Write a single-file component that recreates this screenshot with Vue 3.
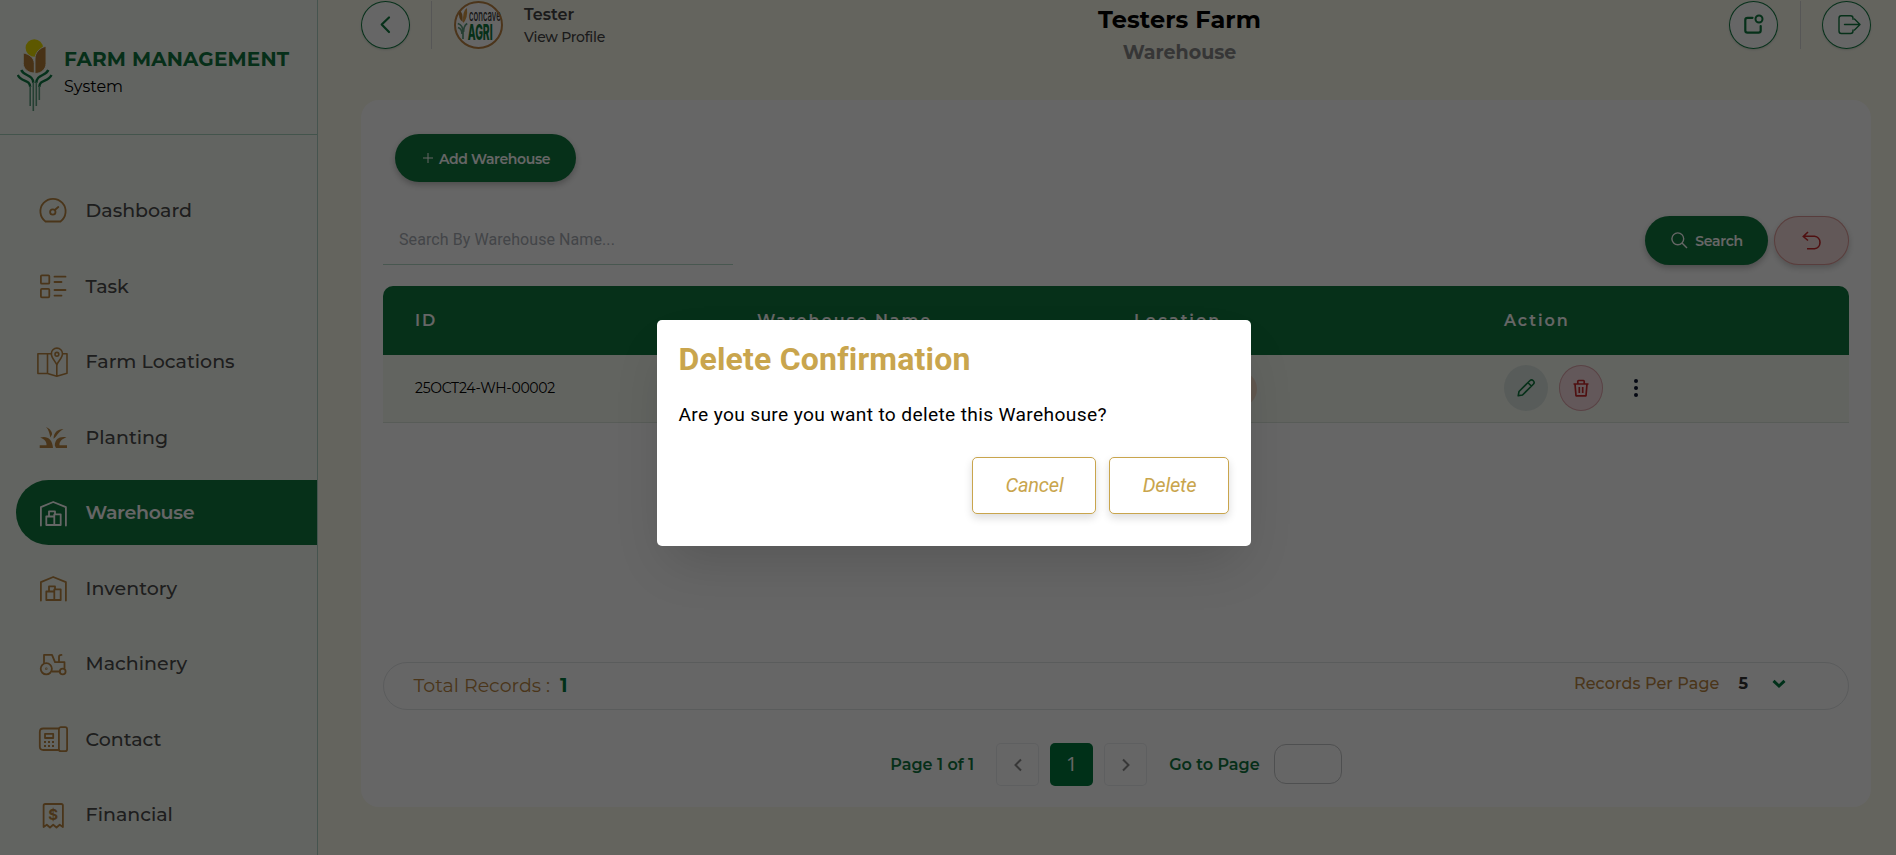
<script setup>
const nav = [
  { label: 'Dashboard', icon: 'dashboard' },
  { label: 'Task', icon: 'task' },
  { label: 'Farm Locations', icon: 'map' },
  { label: 'Planting', icon: 'plant' },
  { label: 'Warehouse', icon: 'store', active: true },
  { label: 'Inventory', icon: 'store' },
  { label: 'Machinery', icon: 'tractor' },
  { label: 'Contact', icon: 'phone' },
  { label: 'Financial', icon: 'receipt' },
]
</script>

<template>
  <div class="page">
    <aside class="sidebar">
      <div class="brand">
        <svg class="logo" width="36" height="74" viewBox="0 0 36 74">
          <circle cx="17.3" cy="9" r="8.7" fill="#e8dc00" />
          <path d="M6.3 14.5C12 15.5 17 19 17.3 25V34.5C11 34.5 6.3 30 6.3 25Z" transform="translate(0 -.5)" fill="#b37d38" stroke="#f5f9f0" stroke-width=".9" />
          <path d="M29 7.2C22.500 9 18 13.500 18 20V34.500C24.500 34.500 29 30 29 24.500Z" fill="#b37d38" stroke="#f5f9f0" stroke-width=".9" />
          <g fill="none" stroke="#107a45">
            <path d="M4.300 31C6.500 37 16.300 35.500 16.300 44" stroke-width="2.400" />
            <path d="M.8 36C4 43.500 13 40 13.200 48" stroke-width="2.400" />
            <path d="M31.300 31C29 37 19.300 35.500 19.300 44" stroke-width="2.400" />
            <path d="M34.500 36C31 43.500 22.500 40 22.300 48" stroke-width="2.400" />
          </g>
          <g fill="none" stroke="#5f9f80" stroke-width="1.600">
            <path d="M16.300 43V72M13.200 47V67M19.300 43V67M22.300 47V61" />
          </g>
        </svg>
        <div class="brand-text">
          <strong>FARM MANAGEMENT</strong>
          <span>System</span>
        </div>
      </div>
      <nav class="nav">
        <a v-for="n in nav" :key="n.label" class="nav-item" :class="{ active: n.active }">
          <svg class="nav-icon" viewBox="0 0 32 32" width="32" height="32">
            <g v-if="n.icon === 'dashboard'">
              <path d="M8.500 26.500H23.500A12.600 12.600 0 1 0 8.500 26.500Z" />
              <circle cx="15.800" cy="17" r="2.700" /><path d="M17.800 15l3.500-3" />
            </g>
            <g v-else-if="n.icon === 'task'">
              <rect x="3.900" y="5.300" width="8.400" height="8.400" rx="1" />
              <rect x="3.900" y="18.900" width="8.400" height="8.400" rx="1" />
              <path d="M17.500 6.700h11M17.500 12h7M17.500 20h11M17.500 25.600h7" />
            </g>
            <g v-else-if="n.icon === 'map'" class="thin">
              <path d="M14.500 7.800H.9V27.500H10.500L19.800 30.200L30 27.300V7.800H25.700M10.500 8V27.500M19.800 18.500V30" />
              <path d="M19.800 18.500C17.500 14.500 14.300 11.500 14.300 7.700A5.600 5.600 0 0 1 25.500 7.700C25.500 11.500 22 14.500 19.800 18.500Z" />
              <circle cx="19.900" cy="8.300" r="1.900" />
            </g>
            <g v-else-if="n.icon === 'plant'" class="solid">
              <path d="M9 6C13 7.500 15.500 11 15 13.500L13.300 16.500C12.500 12.500 12 9 9 6Z" />
              <path d="M26.500 8C20.500 8 16.800 11.500 16.500 17.800C19.500 16 21 11 26.500 8Z" />
              <path d="M3.200 16.500C10 14.500 15.500 18 16 27H2.700V24.300H9.500C10 21 7.500 18 3.200 16.500Z" />
              <path d="M29.500 16.300C23 15 18 17.500 17.800 24.500L19 27H30V24.300H22.500C22 21 25 17.800 29.500 16.300Z" />
            </g>
            <g v-else-if="n.icon === 'store'">
              <path d="M3.900 28.500V10.200L16.200 5L28.900 10.200V28.500" />
              <path d="M9.300 19.500H17.300V28H9.300ZM12 19.500V14.400H18V17.300M17.300 17.300H23.700V28H17.300Z" />
            </g>
            <g v-else-if="n.icon === 'tractor'">
              <circle cx="9.300" cy="20.800" r="5.600" /><circle cx="25.700" cy="23.500" r="2.900" />
              <circle cx="9.300" cy="20.800" r=".3" />
              <path d="M7 14.500V6.900H15L18 14.200H27.500V20M22 14V8.700Q22 6.900 24.500 6.900M15.300 23.500H22.500" />
            </g>
            <g v-else-if="n.icon === 'phone'">
              <path d="M21.900 5.500H6.300Q2.800 5.500 2.800 9V23.500Q2.800 27 6.300 27H21.900" />
              <rect x="21.900" y="4.200" width="8.200" height="24" rx="2" />
              <rect x="8" y="10.800" width="8.200" height="4.200" />
              <path class="dots" d="M7 19h2M11 19h2M15 19h2M7 23h2M11 23h2M15 23h2" />
            </g>
            <g v-else>
              <path d="M6.600 28V6.600Q6.600 5 8.200 5H24.300Q25.900 5 25.900 6.600V28L22.700 25.700L19.500 28.500L16.200 25.700L13 28.500L9.800 25.700Z" />
              <text x="16.200" y="20.700" text-anchor="middle">$</text>
            </g>
          </svg>
          <span>{{ n.label }}</span>
        </a>
      </nav>
    </aside>

    <main class="main">
      <header class="top">
        <div class="top-left">
          <button class="round">
            <svg width="49" height="48" viewBox="0 0 49 48"><path d="M28 16.500L20.700 23.500L28 31" stroke-width="2.200" /></svg>
          </button>
          <i class="divider"></i>
          <svg class="avatar" width="49" height="48" viewBox="0 0 49 48">
            <ellipse cx="24.500" cy="24" rx="23.600" ry="23.100" fill="#fff" />
            <path d="M5 9Q9 10 8.700 21Q4 18 5 9Z" fill="#b37d38" />
            <path d="M13 7Q8.500 9 9 22Q14 18 13 7Z" fill="#d89a45" />
            <path d="M3.800 22.500Q9 24 9 31V38M13.200 22.500Q9.500 25 9.500 31M4 26.500Q8 28 8 33" fill="none" stroke="#5f9f80" stroke-width="1.700" />
            <text transform="translate(15 19.5) scale(.49 1)" class="av-top">concave</text>
            <text transform="translate(13.7 39) scale(.49 1)" class="av-bottom">AGRI</text>
            <ellipse cx="24.500" cy="24" rx="23.500" ry="23" fill="none" stroke="#bd8444" stroke-width="2" />
          </svg>
          <div class="who">
            <strong>Tester</strong>
            <span>View Profile</span>
          </div>
        </div>
        <div class="title">
          <h1>Testers Farm</h1>
          <h2>Warehouse</h2>
        </div>
        <div class="top-right">
          <button class="round">
            <svg width="49" height="48" viewBox="0 0 49 48">
              <path d="M23.500 16.800H18.500Q16.300 16.800 16.300 19V29.500Q16.300 31.600 18.500 31.600H29.500Q31.700 31.600 31.700 29.500V25" stroke-width="2.200" />
              <circle cx="30" cy="18" r="3.500" stroke-width="2" />
            </svg>
          </button>
          <i class="divider"></i>
          <button class="round">
            <svg width="49" height="48" viewBox="0 0 49 48">
              <path d="M31 18.200V17.200Q31 14.800 28.500 14.800H19.300Q17 14.800 17 17.200V30Q17 32.500 19.300 32.500H28.500Q31 32.500 31 30V29M22.500 23.500H37.500M32.500 18L38 23.500L32.500 29" stroke-width="1.400" />
            </svg>
          </button>
        </div>
      </header>

      <section class="card">
        <button class="btn add">
          <svg width="10" height="10" viewBox="0 0 10 10"><path d="M5 0V10M0 5H10" /></svg>
          <span>Add Warehouse</span>
        </button>

        <div class="search-row">
          <input class="search-input" placeholder="Search By Warehouse Name..." />
          <div class="search-actions">
            <button class="btn search">
              <svg width="17" height="17" viewBox="0 0 17 17"><circle cx="6.800" cy="6.800" r="5.900" /><path d="M11 11L16 16" /></svg>
              <span>Search</span>
            </button>
            <button class="btn reset">
              <svg width="20" height="20" viewBox="0 0 20 20"><path d="M6 1L1.300 5.500L6 9.500M1.300 5.300H12.500A6.300 6.300 0 0 1 12.500 17.800H5" /></svg>
            </button>
          </div>
        </div>

        <div class="table">
          <div class="tr head">
            <span>ID</span><span>Warehouse Name</span><span>Location</span><span>Action</span>
          </div>
          <div class="tr row">
            <span class="id">25OCT24-WH-00002</span>
            <span></span>
            <span class="loc"><i class="chip"></i></span>
            <span class="actions">
              <button class="act edit">
                <svg width="20" height="20" viewBox="0 0 20 20"><path d="M2.200 17.800L3 13.500L13.800 2.700A2.400 2.400 0 0 1 17.300 6.200L6.500 17ZM12 4.700L15.300 8M2.200 17.800L6.500 17" /></svg>
              </button>
              <button class="act del">
                <svg width="20" height="20" viewBox="0 0 20 20"><path d="M2.500 6H17.500M4 6L5 17.800H15L16 6M6.800 6V3.300Q6.800 2.500 7.600 2.500H12.400Q13.200 2.500 13.200 3.300V6M8.300 9V15M11.700 9V15" /></svg>
              </button>
              <svg class="more" width="6" height="20" viewBox="0 0 6 20"><circle cx="3" cy="3" r="2" /><circle cx="3" cy="10" r="2" /><circle cx="3" cy="17" r="2" /></svg>
            </span>
          </div>
        </div>

        <div class="totals">
          <div class="total"><span>Total Records :</span><b>1</b></div>
          <div class="per-page">
            <span>Records Per Page</span><b>5</b>
            <svg width="14" height="10" viewBox="0 0 14 10"><path d="M1.500 1.800L7 7L12.500 1.800" /></svg>
          </div>
        </div>

        <div class="pager">
          <span class="pg-label">Page 1 of 1</span>
          <button class="pg prev"><svg width="10" height="14" viewBox="0 0 10 14"><path d="M8 1.500L2.500 7L8 12.500" /></svg></button>
          <button class="pg current">1</button>
          <button class="pg next"><svg width="10" height="14" viewBox="0 0 10 14"><path d="M2 1.500L7.500 7L2 12.500" /></svg></button>
          <span class="pg-label goto">Go to Page</span>
          <input class="pg-input" />
        </div>
      </section>
    </main>

    <div class="overlay">
      <div class="dialog">
        <h3>Delete Confirmation</h3>
        <p>Are you sure you want to delete this Warehouse?</p>
        <div class="dialog-actions">
          <button class="cancel">Cancel</button>
          <button class="delete">Delete</button>
        </div>
      </div>
    </div>
  </div>
</template>

<style>
html, body { margin: 0; overflow: hidden; }
</style>

<style scoped>
* { box-sizing: border-box; }
button { font: inherit; padding: 0; margin: 0; border: 0; background: none; display: flex; align-items: center; justify-content: center; }
input { outline: none; }
svg { display: block; fill: none; }
.page { display: flex; width: 1896px; height: 855px; overflow: hidden; position: relative; font-family: Montserrat, Inter, "Open Sans", sans-serif; background: #f9f9ec; }

.sidebar { width: 318px; height: 855px; flex: none; background: #f5faf2; border-right: 1px solid #b0d2c6; overflow: hidden; }
.brand { height: 135px; border-bottom: 1px solid #a9d2bf; display: flex; padding: 39px 0 0 17px; gap: 11px; }
.brand-text { display: flex; flex-direction: column; padding-top: 7px; }
.brand-text strong { font-size: 20px; line-height: 27px; font-weight: 700; letter-spacing: .18px; color: #10753f; }
.brand-text span { font-size: 16px; line-height: 28px; color: #000; }
.nav { padding: 43px 0 0 16px; display: flex; flex-direction: column; gap: 10.5px; }
.nav-item { height: 65px; flex: none; display: flex; align-items: center; gap: 16.600px; padding-left: 21px; font-size: 19px; font-weight: 500; color: #4b4b4b; white-space: nowrap; }
.nav-item.active { background: #10783f; color: #fff; font-weight: 600; letter-spacing: -.35px; border-radius: 32.5px 0 0 32.5px; }
.nav-icon { stroke: #b98642; stroke-width: 1.8; stroke-linecap: round; stroke-linejoin: round; }
.active .nav-icon { stroke: #fff; }
.nav-icon .thin { stroke-width: 1.6; }
.nav-icon .solid { fill: #b98642; stroke: none; }
.nav-icon .dots { stroke-linecap: butt; stroke-width: 2; }
.nav-icon text { font: 700 15px Inter, sans-serif; fill: #b98642; stroke: none; }

.main { flex: 1; padding: 0 25px 0 43px; }
.top { height: 100px; display: flex; justify-content: space-between; align-items: flex-start; }
.top-left { width: 269px; display: flex; padding-top: 1px; }
.top-right { display: flex; padding-top: 1px; }
.round { width: 49px; height: 48px; border-radius: 50%; background: #fff; box-shadow: inset 0 0 0 1px #10783f, 0 1px 2px rgba(0, 0, 0, .15); }
.round svg { stroke: #10783f; stroke-linecap: round; stroke-linejoin: round; }
.divider { width: 1px; height: 48px; background: #d6d6d6; margin: 0 22px 0 21px; }
.top-right .divider { margin: 0 21px 0 22px; }
.av-top { font: 500 16px Inter, sans-serif; fill: #3a3a3a; }
.av-bottom { font: 800 21px Inter, sans-serif; fill: #10783f; }
.who { display: flex; flex-direction: column; margin: 3px 0 0 21px; color: #444; white-space: nowrap; }
.who strong { font-size: 16px; line-height: 22px; font-weight: 600; }
.who span { font-size: 14px; line-height: 22px; font-weight: 500; letter-spacing: -.26px; }
.title { text-align: center; white-space: nowrap; }
.title h1 { margin: 0; font-size: 24px; line-height: 39px; font-weight: 700; letter-spacing: .1px; color: #000; }
.title h2 { margin: 0; font-size: 19px; line-height: 28px; font-weight: 700; color: #888; }

.card { background: #fff; border-radius: 18px; height: 707px; padding: 34px 22px 0; }
.btn { border-radius: 25px; font-weight: 600; font-size: 14px; letter-spacing: -.3px; color: #fff; background: #10783f; box-shadow: 0 3px 6px rgba(0, 0, 0, .25); }
.btn svg { stroke: #fff; stroke-width: 1.4; }
.add { width: 181px; height: 48px; margin-left: 12px; gap: 6px; padding: 1px 0 0 2px; letter-spacing: -.35px; }
.add svg { stroke-width: 1; margin-top: -2px; }
.search-row { display: flex; justify-content: space-between; margin-top: 34px; height: 49px; }
.search-input { width: 350px; height: 49px; border: 0; border-bottom: 1px solid #b5d9c8; background: none; padding: 0 0 1px 16px; font: 16px Roboto, sans-serif; letter-spacing: .08px; }
.search-input::placeholder { color: #a8acb4; opacity: 1; }
.search-actions { display: flex; gap: 6px; }
.search { width: 123px; gap: 7px; padding-left: 1px; }
.reset { width: 75px; background: #f5dddb; box-shadow: inset 0 0 0 1px #dd9a98, 0 3px 6px rgba(0, 0, 0, .2); }
.reset svg { stroke: #c6282b; stroke-width: 1.6; margin-left: 1px; }

.table { margin-top: 21px; border-radius: 10px 10px 0 0; overflow: hidden; }
.tr { display: grid; grid-template-columns: 342px 377px 370px 1fr; padding-left: 32px; align-items: center; }
.head { height: 69px; background: #10783f; color: #fff; font-size: 16px; font-weight: 600; letter-spacing: 1.95px; }
.row { height: 68px; background: #f5f9f1; border-bottom: 1px solid #dde5dc; }
.id { font-size: 14px; letter-spacing: -.31px; color: #000; margin-top: -1px; }
.loc { display: flex; }
.chip { width: 123px; height: 36px; border-radius: 18px; background: #f2dcc8; }
.actions { display: flex; align-items: center; margin-top: -1px; }
.act { width: 44px; height: 46px; border-radius: 50%; margin-right: 11px; }
.edit { background: #dce7e0; }
.edit svg { stroke: #10783f; stroke-width: 1.6; stroke-linejoin: round; }
.del { background: #f8dde0; box-shadow: inset 0 0 0 1px #dda6ab; }
.del svg { stroke: #c6282b; stroke-width: 1.7; stroke-linejoin: round; }
.more { fill: #0c1530; margin-left: 19px; }

.totals { margin-top: 239px; height: 48px; border: 1px solid #e2e5e7; border-radius: 24px; display: flex; justify-content: space-between; color: #b98642; }
.total { display: flex; align-items: center; gap: 10px; padding: 0 0 2px 29.5px; font-size: 19px; }
.total b { color: #00783c; font-weight: 700; }
.per-page { display: flex; align-items: center; height: 41px; padding-right: 62px; font-size: 16px; font-weight: 500; }
.per-page span { letter-spacing: .1px; }
.per-page b { margin: 0 24px 0 19px; font-weight: 700; color: #333; }
.per-page svg { stroke: #007840; stroke-width: 3; }

.pager { margin-top: 33px; height: 43px; display: flex; align-items: center; justify-content: center; }
.pg-label { font-size: 16px; font-weight: 600; color: #10753f; margin-right: 22px; white-space: nowrap; }
.goto { margin: 0 14px 0 22px; }
.pg { width: 43px; height: 43px; border-radius: 5px; box-shadow: inset 0 0 0 1px #eceef0; }
.pg svg { stroke: #8a8a8a; stroke-width: 2; }
.current { background: #00783c; color: #fff; box-shadow: none; margin: 0 11px; font: 20px "Open Sans", sans-serif; padding-bottom: 3px; }
.pg-input { width: 68px; height: 40px; margin-bottom: 1px; border: 1px solid #c4c6c8; border-radius: 12px; background: none; padding: 0; }

.overlay { position: absolute; inset: 0; background: rgba(0, 0, 0, .6); display: flex; align-items: flex-start; padding: 320px 0 0 657px; }
.dialog { width: 594px; height: 226px; background: #fff; border-radius: 5px; padding: 17px 22px 17px 21.500px; font-family: Roboto, sans-serif; box-shadow: 0 25px 50px -12px rgba(0, 0, 0, .16); }
.dialog h3 { margin: 0; font-size: 32px; line-height: 44px; font-weight: 700; letter-spacing: .18px; color: #c9a54d; }
.dialog p { margin: 22px 0 0; font-size: 19.2px; line-height: 24px; letter-spacing: .34px; color: #000; }
.dialog-actions { display: flex; justify-content: flex-end; gap: 13px; margin-top: 30px; }
.dialog-actions button { height: 57px; border: 1px solid #c9a54d; border-radius: 5px; background: #fff; font-size: 20px; font-style: italic; letter-spacing: -.2px; padding: 0 0 2px 1px; color: #c9a54d; box-shadow: 0 4px 8px rgba(0, 0, 0, .14); }
.dialog-actions .cancel { width: 124px; }
.dialog-actions .delete { width: 120px; }
</style>
